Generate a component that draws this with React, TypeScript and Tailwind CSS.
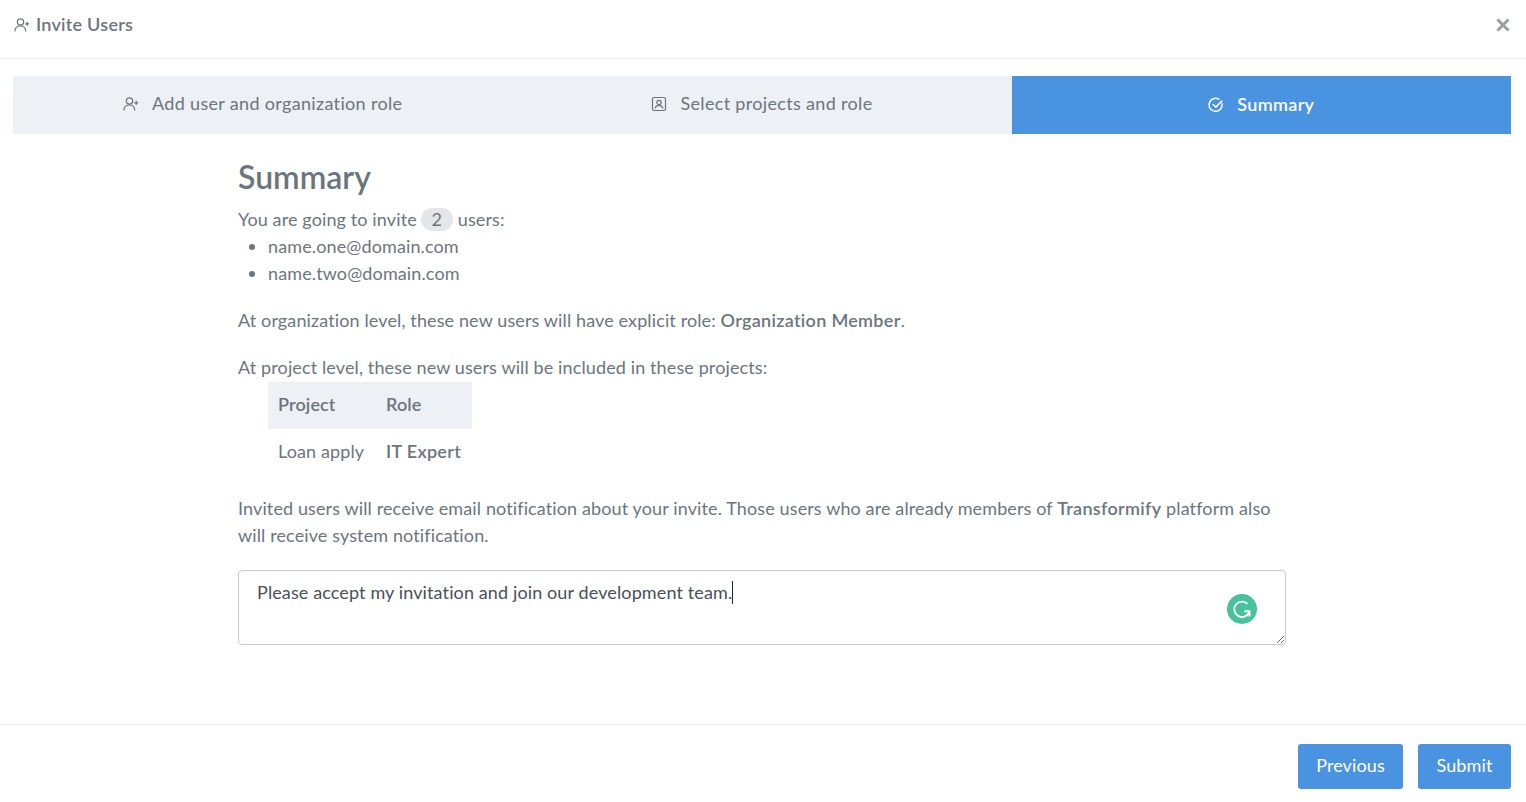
import React from "react";

const UserPlusIcon = ({ className }: { className?: string }) => (
  <svg viewBox="0 0 16 16" fill="none" stroke="currentColor" strokeWidth="1.2" strokeLinecap="round" className={className}>
    <circle cx="6.5" cy="5" r="3.2" />
    <path d="M1 14c0-3.2 2.2-5 5.5-5s5 1.8 5.3 5" />
    <path d="M13.2 5.2v3.2M11.6 6.8h3.2" />
  </svg>
);

const steps = [
  { label: "Add user and organization role", icon: "user" },
  { label: "Select projects and role", icon: "box" },
  { label: "Summary", icon: "check" },
];

const App: React.FC = () => {
  return (
    <div className="w-[1526px] h-[802px] flex flex-col bg-white text-[#6c757d] text-[18px] tracking-[0.12px] leading-[27px] font-['Lato','Open_Sans',sans-serif] overflow-hidden">
      {/* Header */}
      <div className="h-[59px] shrink-0 flex items-center justify-between pl-[14px] pr-[16px] border-b border-[#eceef0] pb-[9px]">
        <div className="flex items-center gap-[6px] text-[18px] tracking-[0.25px] font-semibold">
          <UserPlusIcon className="w-[16px] h-[16px]" />
          <span>Invite Users</span>
        </div>
        <svg viewBox="0 0 14 14" className="w-[14px] h-[14px] text-[#9a9fa8]" fill="none" stroke="currentColor" strokeWidth="3">
          <path d="M1.5 1.5l11 11M12.5 1.5l-11 11" />
        </svg>
      </div>

      {/* Steps */}
      <div className="mt-[17px] ml-[13px] mr-[15px] h-[58px] shrink-0 grid grid-cols-3 bg-[#edf0f5] tracking-[0.33px]">
        {steps.map((step, i) => (
          <div
            key={step.label}
            className={
              i === 2
                ? "flex items-center justify-center gap-[13px] pb-[1px] bg-[#4a93e0] text-white font-semibold"
                : "flex items-center justify-center gap-[13px] pb-[3px]"
            }
          >
            {step.icon === "user" && <UserPlusIcon className="w-[16px] h-[16px]" />}
            {step.icon === "box" && (
              <svg viewBox="0 0 16 16" fill="none" stroke="currentColor" strokeWidth="1.2" className="w-[16px] h-[16px]">
                <rect x="1.5" y="1.5" width="13" height="13" rx="1.5" />
                <circle cx="8" cy="6.5" r="2.2" />
                <path d="M4 12.5c.4-2 2-3 4-3s3.6 1 4 3" />
              </svg>
            )}
            {step.icon === "check" && (
              <svg viewBox="0 0 16 16" fill="none" stroke="currentColor" strokeWidth="1.5" strokeLinecap="round" className="w-[16px] h-[16px]">
                <path d="M14 6.8A6.5 6.5 0 1 1 10.8 2.2" />
                <path d="M5.2 7.5l2.6 2.6 6-6" />
              </svg>
            )}
            <span>{step.label}</span>
          </div>
        ))}
      </div>

      {/* Content */}
      <div className="ml-[238px] w-[1048px] flex-1">
        <h2 className="mt-[23px] text-[32px] leading-[40px] font-semibold tracking-normal">Summary</h2>
        <p className="mt-[9px] flex items-center">
          You are going to invite
          <span className="ml-[4px] mr-[5px] w-[32px] h-[23px] rounded-full bg-[#e4e6e9] flex items-center justify-center">2</span>
          users:
        </p>
        <ul className="list-disc pl-[30px]">
          <li>name.one@domain.com</li>
          <li>name.two@domain.com</li>
        </ul>
        <p className="mt-[20px]">
          At organization level, these new users will have explicit role:{" "}
          <b className="font-semibold tracking-[0.3px]">Organization Member</b>.
        </p>
        <p className="mt-[20px]">At project level, these new users will be included in these projects:</p>
        <table className="ml-[30px] mt-[1px] border-collapse">
          <thead>
            <tr className="bg-[#edf0f5]">
              <th className="w-[108px] h-[47px] px-[10px] pb-[2px] text-left font-semibold">Project</th>
              <th className="w-[96px] h-[47px] px-[10px] pb-[2px] text-left font-semibold">Role</th>
            </tr>
          </thead>
          <tbody>
            <tr>
              <td className="h-[47px] px-[10px] pb-[2px]">Loan apply</td>
              <td className="h-[47px] px-[10px] pb-[2px] font-semibold tracking-[0.3px]">IT Expert</td>
            </tr>
          </tbody>
        </table>
        <p className="mt-[19px]">
          Invited users will receive email notification about your invite. Those users who are already members of{" "}
          <b className="font-semibold tracking-[0.3px]">Transformify</b> platform also will receive system notification.
        </p>
        <div className="relative mt-[21px]">
          <textarea
            readOnly
            value="Please accept my invitation and join our development team."
            className="block w-full h-[75px] border border-[#c5cad1] rounded-[4px] px-[18px] py-[8px] text-[#495057] outline-none resize-y"
          />
          {/* text caret */}
          <div className="absolute left-[494px] top-[11px] w-px h-[23px] bg-[#222]" />
          <div className="absolute right-[29px] top-[24px] w-[30px] h-[30px] rounded-full bg-[#47c29a] flex items-center justify-center">
            <svg viewBox="0 0 20 20" fill="none" stroke="white" strokeWidth="1.7" className="w-[22px] h-[22px]">
              <path d="M15 5.4A7 7 0 1 0 16.4 13" />
              <path d="M12 12h4.8v4.8" />
            </svg>
          </div>
        </div>
      </div>

      {/* Footer */}
      <div className="h-[78px] shrink-0 border-t border-[#eceef0] flex justify-end gap-[15px] pt-[19px] pr-[15px]">
        <button className="w-[105px] h-[45px] pb-[2px] rounded-[3px] bg-[#4a93e0] text-white">Previous</button>
        <button className="w-[93px] h-[45px] pb-[2px] rounded-[3px] bg-[#4a93e0] text-white">Submit</button>
      </div>
    </div>
  );
};

export default App;
